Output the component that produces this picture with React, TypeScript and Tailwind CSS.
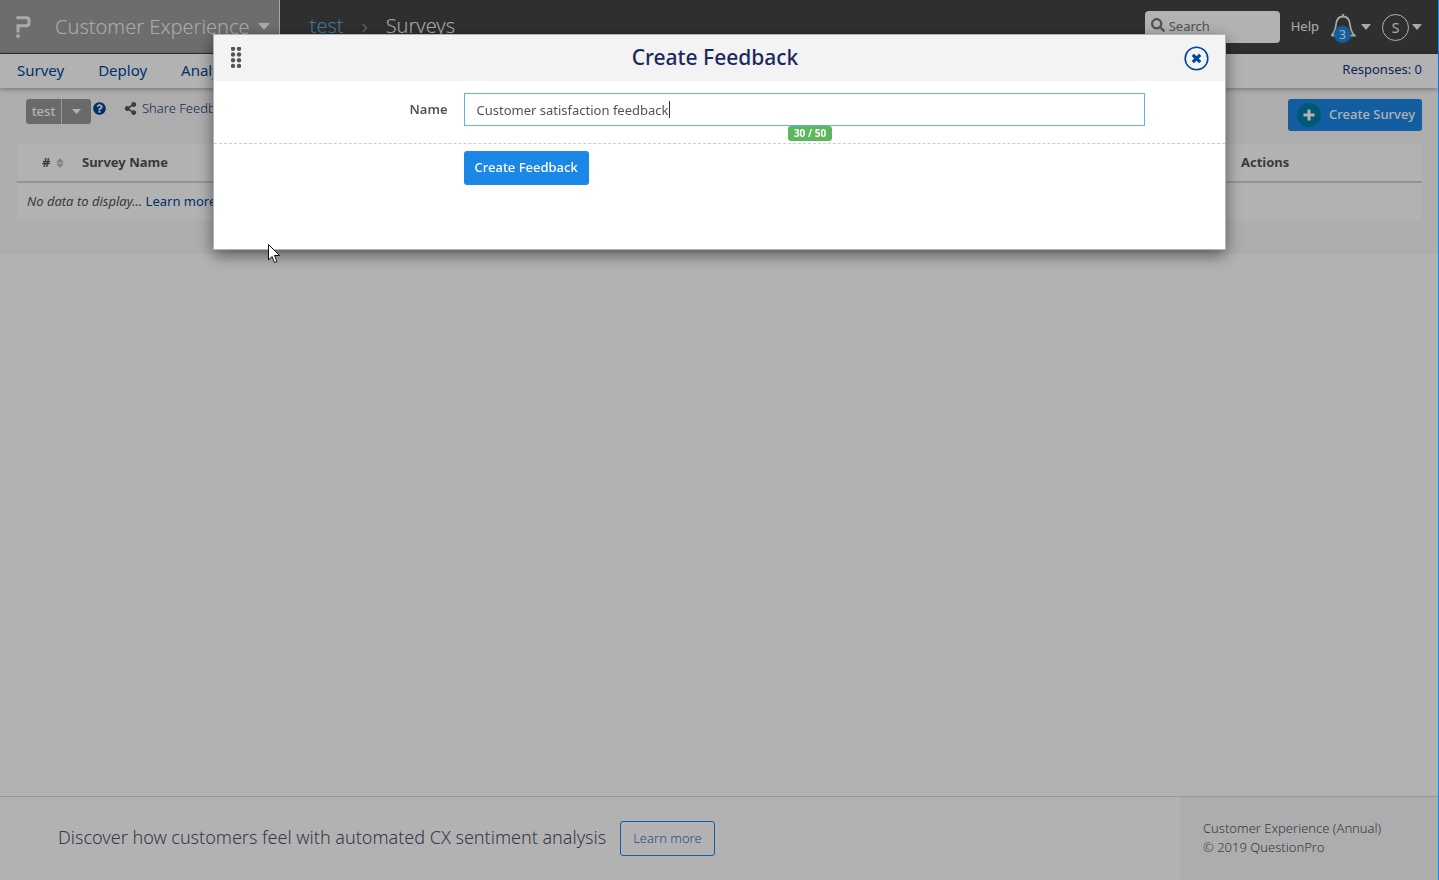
import React from "react";
import { FaSearch, FaQuestionCircle, FaShareAlt, FaChevronRight } from "react-icons/fa";

function Caret({ className = "" }: { className?: string }) {
  return (
    <svg viewBox="0 0 10 5" preserveAspectRatio="none" className={className} aria-hidden="true">
      <path d="M0 0H10L5 5Z" fill="currentColor" />
    </svg>
  );
}

function Logo() {
  return (
    <svg width="15" height="22" viewBox="0 0 15 22" fill="none" aria-hidden="true">
      <path d="M0.5 1.7H10.500Q13 1.7 13 4.500V6.500Q13 9.800 10.500 9.800H2V16.500" stroke="#f4f4f4" strokeWidth="3" />
      <circle cx="2" cy="20" r="1.900" fill="#f4f4f4" />
    </svg>
  );
}

function Bell() {
  return (
    <svg width="26" height="26" viewBox="0 0 26 26" fill="none" stroke="#f0f0f0" strokeWidth="1.8" aria-hidden="true">
      <path d="M13 0V2.500M1.500 21.500C5 18 5.500 15 6 10.500C6.500 5 9 2.500 13 2.500C17 2.500 19.500 5 20 10.500C20.500 15 21 18 24.500 21.500H1.500" />
    </svg>
  );
}

function TopBar() {
  return (
    <header className="flex h-[54px] bg-[#444] text-[#f4f4f4]">
      <div className="flex items-center border-r border-b border-r-[#f0f0f0] border-b-[#444] bg-[#9d9d9d] pr-[9px] pl-4">
        <Logo />
        <button type="button" className="ml-6 flex items-center gap-2 text-[20px] font-light">
          Customer Experience
          <Caret className="h-[7px] w-3" />
        </button>
      </div>
      <nav className="flex items-center gap-4 pb-0.5 pl-[30px] text-[20px] font-light">
        <a href="#test" className="text-[#5bb0dc]">test</a>
        <FaChevronRight className="mt-1 size-2.5 text-[#888]" />
        <span>Surveys</span>
      </nav>
      <div className="ml-auto flex items-center pr-4">
        <label className="flex h-8 w-[135px] items-center gap-1 rounded-sm bg-white px-1.5 text-[#777]">
          <FaSearch className="mb-1 size-3.5 shrink-0" />
          <input type="search" placeholder="Search" aria-label="Search" className="w-full min-w-0 text-[13px] outline-none placeholder:text-[#777]" />
        </label>
        <a href="#help" className="ml-[11px] text-[13px]">Help</a>
        <button type="button" aria-label="Notifications" className="ml-[11px] flex items-center gap-[5px]">
          <span className="relative">
            <Bell />
            <span className="absolute top-3 left-1 flex size-[17px] items-center justify-center rounded-full bg-[#1b87e6] text-[12px]">3</span>
          </span>
          <Caret className="h-[6px] w-2.5" />
        </button>
        <button type="button" aria-label="Account" className="ml-[11px] flex items-center gap-[3px]">
          <span className="flex size-[27px] items-center justify-center rounded-full border border-white text-[14px]">S</span>
          <Caret className="h-[6px] w-2.5" />
        </button>
      </div>
    </header>
  );
}

function NavBar() {
  return (
    <nav className="relative flex h-[34px] items-center gap-[34px] bg-white pr-4 pb-0.5 pl-[17px] text-[15px] text-[#00479b] shadow-[0_1px_5px_rgba(0,0,0,0.35)]">
      <a href="#survey">Survey</a>
      <a href="#deploy">Deploy</a>
      <a href="#analytics">Analytics</a>
      <span className="ml-auto text-[13px] text-[#1b3380]">Responses: 0</span>
    </nav>
  );
}

function SurveyPanel() {
  return (
    <main className="bg-[#f8f8f8] pt-[11px] pr-4 pb-[34px] pl-[17px]">
      <div className="flex h-[45px] items-start">
        <div className="ml-[9px] flex h-[25px] overflow-hidden rounded-[3px] bg-[#999] text-[13px] text-white">
          <button type="button" className="w-[35px] text-center font-medium">test</button>
          <button type="button" aria-label="Choose feedback" className="flex w-[30px] items-center justify-center border-l border-[#ddd]">
            <Caret className="h-[5px] w-[9px]" />
          </button>
        </div>
        <FaQuestionCircle className="mt-[3px] ml-0.5 size-[13px] text-[#00479b]" />
        <a href="#share" className="ml-[18px] flex items-center gap-[5px] text-[13px] font-light text-[#1b3380]">
          <FaShareAlt className="size-[13px] text-[#555]" />
          Share Feedback
        </a>
        <button type="button" className="ml-auto flex h-8 items-center gap-2 rounded-[3px] bg-[#1b87e6] pr-[7px] pl-[9px] text-[13px] font-medium text-white">
          <span className="flex size-6 items-center justify-center rounded-full bg-[#007fa8]">
            <svg width="12" height="12" viewBox="0 0 12 12" aria-hidden="true">
              <path d="M6 0.500V11.500M0.500 6H11.500" stroke="white" strokeWidth="3" />
            </svg>
          </span>
          Create Survey
        </button>
      </div>
      <table className="w-full bg-white text-[13px] text-[#545454]">
        <thead>
          <tr className="h-[38px] border-b-2 border-[#d5d5d5] text-left">
            <th className="w-14 pl-[25px]">
              <span className="flex items-center gap-1.5">
                #
                <svg width="8" height="10" viewBox="0 0 8 10" fill="#bbb" aria-hidden="true">
                  <path d="M4 0L8 4.500H0ZM0 5.500H8L4 10Z" />
                </svg>
              </span>
            </th>
            <th className="pl-[9px]">Survey Name</th>
            <th className="w-[181px]">Actions</th>
          </tr>
        </thead>
        <tbody>
          <tr className="h-[38px]">
            <td colSpan={3} className="pl-2.5">
              <i>No data to display...</i> <a href="#learn" className="text-[#00479b]">Learn more</a>
            </td>
          </tr>
        </tbody>
      </table>
    </main>
  );
}

function Footer() {
  return (
    <footer className="mt-auto flex h-[84px] border-t border-[#d8d8d8] font-light text-[#4a5468]">
      <div className="flex flex-1 items-center gap-3.5 pl-[58px]">
        <span className="pb-0.5 text-[18px]">Discover how customers feel with automated CX sentiment analysis</span>
        <a href="#more" className="flex h-[35px] items-center rounded-[3px] border border-[#1b87e6] px-3 text-[13px] text-[#3a6bc8]">Learn more</a>
      </div>
      <div className="w-[258px] bg-[#f8f8f8] pt-[22px] pl-[23px] text-[13px] leading-[19px]">
        <p>Customer Experience (Annual)</p>
        <p>© 2019 QuestionPro</p>
      </div>
    </footer>
  );
}

const dots = [1.8, 7.5, 13.2, 18.9];

function FeedbackDialog() {
  return (
    <div className="fixed inset-y-0 right-px left-0 flex items-start justify-center bg-black/30 pt-[34px]">
      <section role="dialog" aria-labelledby="dialog-title" className="w-full max-w-[1013px] border border-[#b4b4b4] bg-white pb-16 shadow-[0_5px_15px_rgba(0,0,0,0.5)]">
        <div className="flex h-[46px] items-center bg-[#f3f3f3] pr-4 pl-[17px]">
          <svg width="16" height="22" viewBox="0 0 16 22" fill="#555" aria-hidden="true">
            {dots.map((y) => (
              <React.Fragment key={y}>
                <circle cx="2" cy={y} r="2.2" />
                <circle cx="8" cy={y} r="2.2" />
              </React.Fragment>
            ))}
          </svg>
          <h2 id="dialog-title" className="flex-1 text-center text-[21px] font-medium text-[#1b2a5c]">Create Feedback</h2>
          <button type="button" aria-label="Close" className="text-[#00479b]">
            <svg width="25" height="25" viewBox="0 0 25 25" fill="none" stroke="currentColor" aria-hidden="true">
              <circle cx="12.500" cy="12.500" r="11.300" strokeWidth="1.600" />
              <path d="M8.800 8.800L16.200 16.200M16.200 8.800L8.800 16.200" strokeWidth="3.200" />
            </svg>
          </button>
        </div>
        <form>
          <div className="flex h-[63px] items-start border-b border-dashed border-[#ccc] pt-3">
            <label htmlFor="feedback-name" className="w-[250px] pr-4 text-right text-[13px] leading-[33px] font-semibold text-[#545454]">Name</label>
            <div className="relative mr-20 flex flex-1 flex-col items-center">
              <input id="feedback-name" defaultValue="Customer satisfaction feedback" className="h-[33px] w-full border border-[#66afe9] px-3 text-[13px] text-[#545454] outline-none" />
              <span className="absolute top-2 left-[205px] h-[17px] w-px bg-[#333]" />
              <span className="ml-3 rounded-[3px] bg-[#5cb85c] px-1.5 text-[10px] leading-[15px] font-bold text-white">30 / 50</span>
            </div>
          </div>
          <button type="submit" className="mt-[7px] ml-[250px] h-[34px] rounded-[3px] bg-[#1b87e6] px-[11px] text-[13px] font-medium text-white">Create Feedback</button>
        </form>
      </section>
    </div>
  );
}

function Pointer() {
  return (
    <svg className="absolute top-[244px] left-[268px]" width="12" height="19" viewBox="0 0 12 19" aria-hidden="true">
      <path d="M0.500 0.500V16L4 12.500L6.500 18.500L9 17.500L6.500 11.500H11.500Z" fill="white" stroke="#111" />
    </svg>
  );
}

export default function App() {
  return (
    <div className="flex min-h-screen flex-col border-r border-[#1b87e6] bg-white font-['Noto_Sans','Open_Sans',sans-serif]">
      <TopBar />
      <NavBar />
      <SurveyPanel />
      <Footer />
      <FeedbackDialog />
      <Pointer />
    </div>
  );
}
